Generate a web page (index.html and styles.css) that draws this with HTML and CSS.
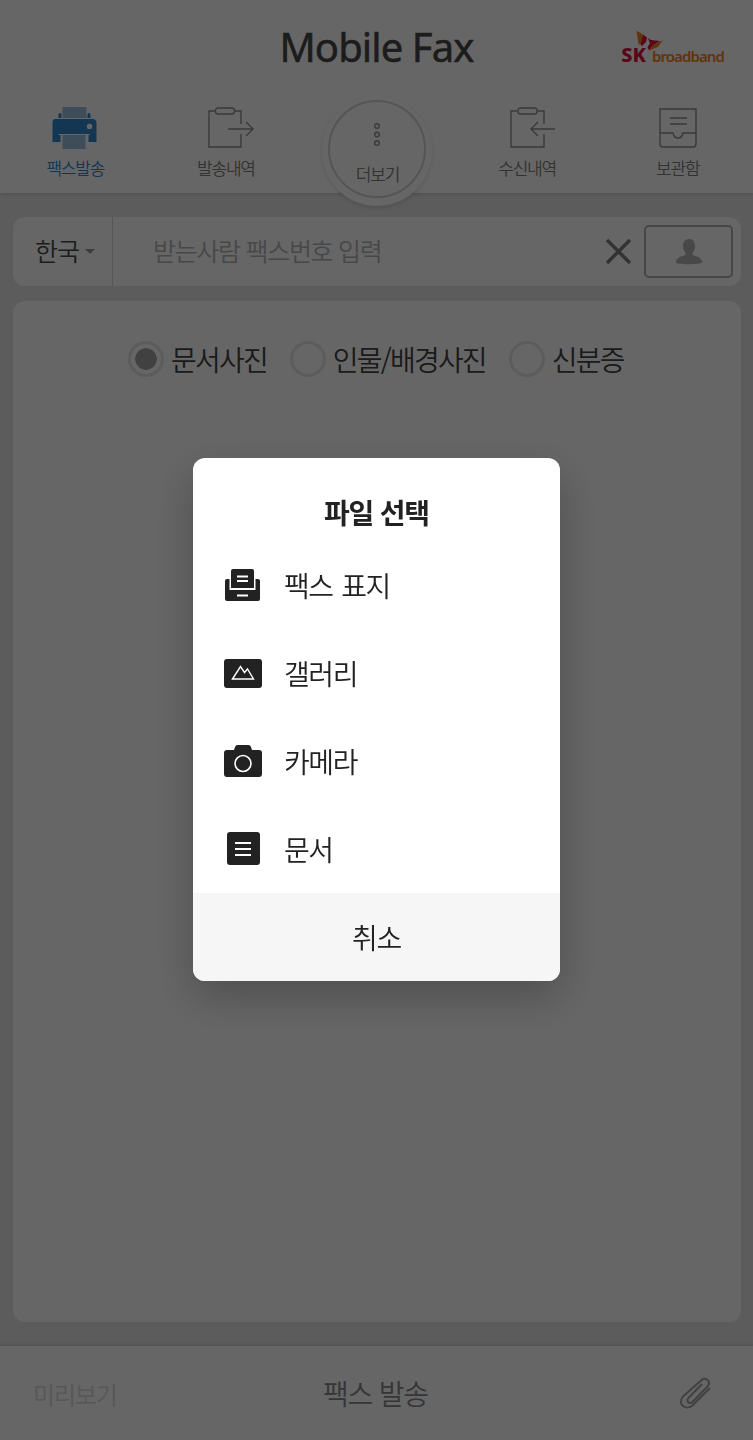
FILE: index.html
```html
<!DOCTYPE html>
<html lang="ko">
<head>
    <meta charset="UTF-8">
    <meta name="viewport" content="width=device-width, initial-scale=1.0">
    <title>Mobile Fax</title>
    <link rel="stylesheet" href="styles.css">
</head>
<body>
    <div class="page">
        <header class="header">
            <div class="title-bar">
                <h1>Mobile Fax</h1>
                <div class="logo">
                    <svg class="logo-wing" width="28" height="22" viewBox="0 0 28 22">
                        <path fill="#f58220" d="M.5.500L7 4.500 5 14l-2.500.5zM16.500 15.500L27 10l-5 7-9 3.500z"/>
                        <path fill="#e0103c" d="M7 4.500l4 3-1 4.500-4 4-1.500-1.500zM12 8l3 2 9 1-7.500 4.500-3.500 5-1.500-3.500 2.500-3.500z"/>
                    </svg>
                    <span class="logo-sk">SK</span><span class="logo-name">broadband</span>
                </div>
            </div>
            <nav class="tabs">
                <a class="tab active">
                    <svg width="46" height="42" viewBox="0.500 0 46 42">
                        <path fill="#9fc0e4" d="M11 0h24v11H11zM11 28h23v14H11z"/>
                        <path fill="#3088d0" d="M7 7q1.500-2 3 0v4H7zM36 7q1.500-2 3 0v4h-3zM4 12h37q4 0 4 4v19h-8v-7h1v-1H7v1h2v7H1V16q0-4 3-4z"/>
                        <circle cx="38" cy="19.500" r="2.700" fill="#fff"/>
                    </svg>
                    <span>팩스발송</span>
                </a>
                <a class="tab">
                    <svg width="50" height="42" viewBox="-5 0 50 42">
                        <path class="line" d="M9 4H3v36h32V27M35 17V4h-7M22 22h25M40 15l7 7-7 7"/>
                        <rect class="line" x="9.500" y="1" width="19" height="6" rx="2.500"/>
                    </svg>
                    <span>발송내역</span>
                </a>
                <a class="tab more">
                    <div class="more-circle">
                        <div class="more-ring">
                            <svg width="10" height="26" viewBox="0 0 10 26">
                                <g class="line"><circle cx="5" cy="5" r="2.300"/><circle cx="5" cy="13.500" r="2.300"/><circle cx="5" cy="22" r="2.300"/></g>
                            </svg>
                            <span>더보기</span>
                        </div>
                    </div>
                </a>
                <a class="tab">
                    <svg width="50" height="42" viewBox="-1 0 50 42">
                        <path class="line" d="M14 4H8v36h33V27M41 17V4h-7M52 22H28M35 15l-7 7 7 7"/>
                        <rect class="line" x="15" y="1" width="19" height="6" rx="2.500"/>
                    </svg>
                    <span>수신내역</span>
                </a>
                <a class="tab">
                    <svg width="38" height="42" viewBox="0 0 38 42">
                        <path class="line" d="M1 2h36v35q0 3-3 3H4q-3 0-3-3zM11 11h17M11 17h17M1 26h13q1 5 5 5t5-5h13"/>
                    </svg>
                    <span>보관함</span>
                </a>
            </nav>
        </header>

        <main class="content">
            <div class="number-box">
                <div class="country">한국<i class="caret"></i></div>
                <div class="number">받는사람 팩스번호 입력</div>
                <svg class="clear" width="27" height="27" viewBox="0 0 27 27">
                    <path d="M2 2l23 23M25 2L2 25" stroke="#808080" stroke-width="3.500"/>
                </svg>
                <div class="contact">
                    <svg width="26" height="26" viewBox="0 0 26 26">
                        <path fill="#b4b4b4" d="M13 0c4 0 6 3 6 7 0 3-1 5-2.500 7-.5 1 0 2 1 2.500 5 1 8.500 3 8.500 7 0 2-26 2.500-26 0 0-4 3.500-6 8.500-7 1-.5 1.500-1.500 1-2.500C8 12 7 10 7 7c0-4 2-7 6-7z"/>
                    </svg>
                </div>
            </div>

            <div class="paper">
                <div class="kinds">
                    <label class="kind"><i class="radio checked"></i>문서사진</label>
                    <label class="kind"><i class="radio"></i>인물/배경사진</label>
                    <label class="kind"><i class="radio"></i>신분증</label>
                </div>
            </div>
        </main>

        <footer class="footer">
            <span class="preview">미리보기</span>
            <span class="send">팩스 발송</span>
            <svg class="clip" width="34" height="34" viewBox="0 0 34 34">
                <path d="M24 8L10.500 22c-3 3.500 1 7 4.500 3.500L29.500 10.500c4.500-5-2-10.500-6.500-6L5 20.500c-6 7.500 2.500 15 10 8.500l17-17"/>
            </svg>
        </footer>
    </div>

    <div class="overlay">
        <div class="dialog">
            <h2>파일 선택</h2>
            <ul class="file-list">
                <li>
                    <svg width="38" height="34" viewBox="0 0 38 34">
                        <path fill="#222" d="M9 1h19q2 0 2 2v17H7V3q0-2 2-2zM3 11h2.500v11h26V11H34q2 0 2 2v18q0 2-2 2H3q-2 0-2-2V13q0-2 2-2z"/>
                        <path stroke="#fff" stroke-width="1.800" d="M13 8.500h11M13 13h11M13 27.500h11"/>
                    </svg>
                    <span>팩스 표지</span>
                </li>
                <li>
                    <svg width="38" height="34" viewBox="0 0 38 34">
                        <rect y="3" width="38" height="29" rx="3" fill="#222"/>
                        <path fill="none" stroke="#fff" stroke-width="1.400" d="M8.500 23L16.500 10.500l4 6 3-3.500L29.500 23z"/>
                    </svg>
                    <span>갤러리</span>
                </li>
                <li>
                    <svg width="38" height="34" viewBox="0 0 38 34">
                        <path fill="#222" d="M3 6h7l1-3q.7-2 2.500-2h11q1.800 0 2.500 2l1 3h7q3 0 3 3v21q0 3-3 3H3q-3 0-3-3V9q0-3 3-3z"/>
                        <circle cx="19" cy="19.500" r="8" fill="none" stroke="#fff" stroke-width="1.600"/>
                    </svg>
                    <span>카메라</span>
                </li>
                <li>
                    <svg width="38" height="34" viewBox="0 0 38 34">
                        <rect x="3" y="0" width="33" height="33" rx="3" fill="#222"/>
                        <path stroke="#fff" stroke-width="1.800" d="M11 11h16M11 17h16M11 23h16"/>
                    </svg>
                    <span>문서</span>
                </li>
            </ul>
            <div class="cancel">취소</div>
        </div>
    </div>
</body>
</html>
```

FILE: styles.css
```css
* {
    box-sizing: border-box;
}

body {
    margin: 0;
    font-family: "Noto Sans CJK KR", sans-serif;
    font-weight: 350;
    color: #222;
}

h1, h2, ul {
    margin: 0;
    padding: 0;
}

.page {
    display: flex;
    flex-direction: column;
    height: 1440px;
    overflow: hidden;
    background-color: #e6e6e6;
}

/* header */
.header {
    position: relative;
    height: 193px;
    background-color: #fff;
    box-shadow: 0 1px 4px rgba(0, 0, 0, 0.16);
}

.title-bar {
    display: flex;
    justify-content: center;
    height: 96px;
    padding-top: 17px;
}

.title-bar h1 {
    font-family: "Noto Sans", sans-serif;
    font-size: 40px;
    font-weight: 400;
    line-height: 60px;
    letter-spacing: -0.9px;
    color: #484848;
    -webkit-text-stroke: 0.5px #484848;
}

.logo {
    position: absolute;
    top: 30px;
    right: 29px;
    display: flex;
    align-items: baseline;
    padding-top: 12px;
    font-family: "Noto Sans", sans-serif;
    line-height: 26px;
}

.logo-wing {
    position: absolute;
    top: 0;
    left: 15px;
}

.logo-sk {
    font-size: 20px;
    font-weight: 800;
    color: #e0103c;
    margin-right: 6px;
}

.logo-name {
    font-size: 15px;
    font-weight: 600;
    color: #f58220;
    letter-spacing: -0.9px;
}

.tabs {
    display: flex;
}

.tab {
    flex: 1;
    display: flex;
    flex-direction: column;
    align-items: center;
    padding-top: 11px;
    font-size: 17px;
    line-height: 24px;
    letter-spacing: -1.2px;
    color: #808080;
}

.tab svg {
    margin-bottom: 7px;
    overflow: visible;
}

.tab.active {
    color: #3088d0;
}

.line {
    fill: none;
    stroke: #909090;
    stroke-width: 1.4;
}

.more {
    position: relative;
}

.more-circle {
    position: absolute;
    top: 0;
    left: 50%;
    width: 110px;
    height: 110px;
    margin-left: -54px;
    padding: 4px 6px;
    border-radius: 50%;
    background-color: #fff;
    box-shadow: 0 2px 4px rgba(0, 0, 0, 0.12);
}

.more-ring {
    display: flex;
    flex-direction: column;
    align-items: center;
    width: 98px;
    height: 98px;
    padding-top: 19px;
    border: 2px solid #d4d4d4;
    border-radius: 50%;
}

.more-ring svg {
    margin-bottom: 15px;
}

/* content */
.content {
    flex: 1;
    display: flex;
    flex-direction: column;
    gap: 15px;
    padding: 24px 12px 24px 13px;
}

.number-box {
    display: flex;
    align-items: center;
    height: 69px;
    padding-right: 8px;
    border-radius: 12px;
    background-color: #fff;
}

.country {
    display: flex;
    align-items: center;
    width: 100px;
    height: 69px;
    padding: 0 0 3px 22px;
    border-right: 1px solid #d6d6d6;
    font-size: 25px;
    letter-spacing: -1px;
    color: #4a4a4a;
}

.caret {
    margin: 2px 0 0 6px;
    border: 5px solid transparent;
    border-top-color: #999;
    border-bottom: 0;
}

.number {
    flex: 1;
    padding: 0 0 3px 40px;
    font-size: 25px;
    letter-spacing: -1.3px;
    color: #b4b4b4;
}

.clear {
    margin-right: 12px;
}

.contact {
    display: flex;
    align-items: center;
    justify-content: center;
    width: 89px;
    height: 53px;
    border: 2px solid #b0b0b0;
    border-radius: 5px;
}

.paper {
    flex: 1;
    border-radius: 12px;
    background-color: #fff;
}

.kinds {
    display: flex;
    gap: 23px;
    padding: 38px 0 0 115px;
}

.kind {
    display: flex;
    align-items: center;
    height: 40px;
    font-size: 28px;
    letter-spacing: -1.8px;
    color: #444;
}

.radio {
    width: 36px;
    height: 36px;
    margin-right: 7px;
    border: 3px solid #e6e6e6;
    border-radius: 50%;
}

.radio.checked {
    background: radial-gradient(circle, #a4a4a4 10.5px, transparent 11px);
}

/* footer */
.footer {
    position: relative;
    display: flex;
    align-items: center;
    justify-content: space-between;
    height: 94px;
    padding: 0 41px 0 33px;
    background-color: #fff;
    box-shadow: 0 -2px 4px rgba(0, 0, 0, 0.1);
}

.preview {
    width: 96px;
    font-size: 24px;
    letter-spacing: -1.2px;
    color: #dadada;
}

.send {
    font-size: 28px;
    letter-spacing: -1.2px;
    color: #888;
}

.clip {
    margin-left: 56px;
    fill: none;
    stroke: #a4a4a4;
    stroke-width: 2;
}

/* file dialog */
.overlay {
    position: fixed;
    top: 0;
    left: 0;
    right: 0;
    bottom: 0;
    display: flex;
    align-items: center;
    justify-content: center;
    padding-bottom: 1px;
    background-color: rgba(0, 0, 0, 0.6);
}

.dialog {
    width: 367px;
    height: 523px;
    border-radius: 12px;
    overflow: hidden;
    background-color: #fff;
    box-shadow: 0 16px 44px rgba(0, 0, 0, 0.24);
}

.dialog h2 {
    height: 83px;
    padding-top: 26px;
    font-size: 28px;
    font-weight: 600;
    line-height: 56px;
    letter-spacing: -1.2px;
    text-align: center;
}

.file-list {
    list-style: none;
}

.file-list li {
    display: flex;
    align-items: center;
    gap: 22px;
    height: 88px;
    padding-left: 31px;
    font-size: 28px;
    letter-spacing: -1.4px;
    word-spacing: 2px;
}

.cancel {
    height: 88px;
    background-color: #f6f6f6;
    font-size: 28px;
    line-height: 89px;
    letter-spacing: -1.3px;
    text-align: center;
}
```
